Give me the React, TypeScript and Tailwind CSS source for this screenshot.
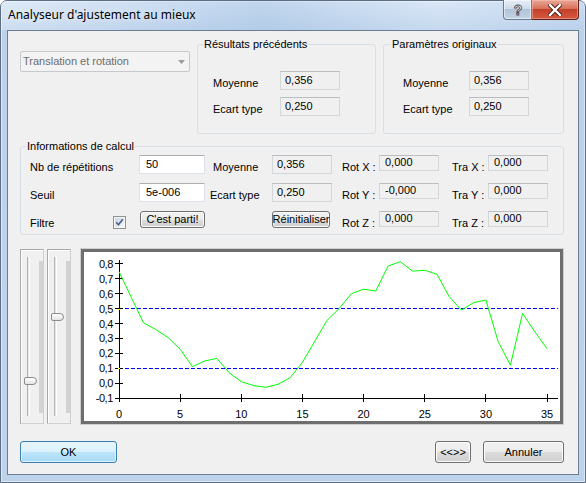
import React from 'react';

const data = [
  0.748, 0.577, 0.405, 0.36, 0.307, 0.227, 0.11, 0.148, 0.166, 0.07, 0.01, -0.017, -0.028, -0.008, 0.036, 0.14,
  0.28, 0.42, 0.5, 0.6, 0.63, 0.618, 0.786, 0.815, 0.752, 0.757, 0.73, 0.58, 0.49, 0.54, 0.558, 0.28, 0.12, 0.468,
  0.345, 0.23,
];

const btn =
  'flex items-center justify-center rounded-[3px] border border-[#707070] bg-[linear-gradient(#f2f2f2,#ebebeb_50%,#dddddd_50%,#cfcfcf)] shadow-[inset_0_0_0_1px_#fbfbfb]';

const ReadField = ({ value }: { value: string }) => (
  <div className="h-[19px] w-[60px] border border-[#d3d6db] border-t-[#babdc2] bg-[#f0f0f0] pl-[4px] pt-[2px] leading-[13px]">
    {value}
  </div>
);

const SmallField = ({ value }: { value: string }) => (
  <div className="h-[16px] w-[60px] border border-[#d3d6db] border-t-[#babdc2] bg-[#f0f0f0] pl-[5px] leading-[13px]">
    {value}
  </div>
);

const Input = ({ value }: { value: string }) => (
  <div className="h-[19px] w-[66px] border border-[#dde2e8] border-t-[#abadb3] bg-white pl-[6px] pt-[2px] leading-[13px]">
    {value}
  </div>
);

const Label = ({ children, className = '' }: { children: React.ReactNode; className?: string }) => (
  <div className={`mt-[6px] whitespace-nowrap leading-[13px] ${className}`}>{children}</div>
);

const Slider = ({ thumb }: { thumb: string }) => (
  <div className="relative flex h-full w-[24px] border border-[#a8a8a8] border-b-[#d0d0d0] border-r-[#d0d0d0] shadow-[inset_1px_1px_0_#ffffff]">
    <div className="mb-[7px] ml-[6px] mt-[7px] w-[3px] border-l border-r border-l-[#b4b4b4] border-r-[#ffffff] bg-[#e6e6e6]" />
    <div className="mb-[10px] ml-[9px] mt-[11px] w-[4px] bg-[#d2d2d2]" />
    <div
      className={`absolute left-[3px] h-[8px] w-[13px] rounded-l-[2px] rounded-r-[4px] border border-[#8c8c8c] bg-[linear-gradient(#ffffff,#e4e4e4)] ${thumb}`}
    />
  </div>
);

const Chart = () => {
  const X = (i: number) => 35 + i * 12.23;
  const Y = (v: number) => 146 - (v + 0.1) * 149;
  const pts = data.map((v, i) => `${X(i).toFixed(1)},${Y(v).toFixed(1)}`).join(' ');
  const yTicks = [0.8, 0.7, 0.6, 0.5, 0.4, 0.3, 0.2, 0.1, 0, -0.1];
  const xTicks = [0, 5, 10, 15, 20, 25, 30, 35];

  return (
    <svg width="476" height="169" className="block" fontFamily="'Liberation Sans', Arial, sans-serif" fontSize="11">
      {/* threshold lines */}
      <line x1="35" y1={Y(0.5)} x2="474" y2={Y(0.5)} stroke="#0000ff" strokeDasharray="4 2" shapeRendering="crispEdges" />
      <line x1="35" y1={Y(0.1)} x2="474" y2={Y(0.1)} stroke="#0000ff" strokeDasharray="4 2" shapeRendering="crispEdges" />
      {/* axes */}
      <line x1="35" y1="8" x2="35" y2="147" stroke="#000" shapeRendering="crispEdges" />
      <line x1="35" y1="146" x2="474" y2="146" stroke="#000" shapeRendering="crispEdges" />
      {yTicks.map((v) => (
        <g key={v}>
          <line x1="31" y1={Y(v)} x2="39" y2={Y(v)} stroke="#000" shapeRendering="crispEdges" />
          <text x="29" y={Y(v) + 4} textAnchor="end" letterSpacing="-0.4">
            {v.toFixed(1).replace('.', ',')}
          </text>
        </g>
      ))}
      {xTicks.map((t) => (
        <g key={t}>
          <line x1={X(t)} y1="142" x2={X(t)} y2="150" stroke="#000" shapeRendering="crispEdges" />
          <text x={X(t)} y="166" textAnchor="middle">
            {t}
          </text>
        </g>
      ))}
      <rect x="34" y={Math.round(Y(0.5))} width="2" height="1" fill="#ffff00" />
      <rect x="34" y={Math.round(Y(0.1))} width="2" height="1" fill="#ffff00" />
      <polyline points={pts} fill="none" stroke="#00ff00" strokeWidth="1" />
    </svg>
  );
};

export default function App() {
  return (
    <div className="h-[483px] w-[586px] font-['Liberation_Sans',Arial,sans-serif] text-[11px] text-black">
      <div className="flex h-full w-full flex-col rounded-t-[7px] border border-[#5d6d82] bg-[linear-gradient(180deg,#d3e3f5_0px,#bcd2eb_30px,#bdd3ec_100%)] shadow-[inset_0_0_0_1px_rgba(255,255,255,0.5)]">
        {/* title bar */}
        <div className="flex h-[29px] items-start bg-[linear-gradient(90deg,rgba(255,255,255,0.25),rgba(160,190,225,0.35)_45%,rgba(255,255,255,0.15)_75%,rgba(180,205,235,0.3))]">
          <div className="pl-[7px] pt-[6px] font-['Noto_Sans',sans-serif] text-[12px] leading-[16px] [text-shadow:0_0_6px_rgba(255,255,255,0.95)]">
            Analyseur d'ajustement au mieux
          </div>
          <div className="-mt-[1px] ml-auto mr-[6px] flex h-[20px]">
            <div className="flex w-[29px] items-center justify-center rounded-bl-[4px] border border-t-0 border-[#6b7c92] bg-[linear-gradient(#e6eef7,#cfdbe9_45%,#b2c4d9_50%,#c4d4e6)] shadow-[inset_0_0_0_1px_rgba(255,255,255,0.5)]">
              <svg width="12" height="14">
                <text x="6" y="12" textAnchor="middle" fontFamily="'Liberation Sans', Arial, sans-serif" fontSize="14" fontWeight="bold" fill="#ffffff" stroke="#3f4c5e" strokeWidth="0.9">?</text>
              </svg>
            </div>
            <div className="flex w-[47px] items-center justify-center rounded-br-[4px] border border-l-0 border-t-0 border-[#5e2119] bg-[linear-gradient(#eaa997,#d8715b_45%,#c4412a_50%,#d3583f)] shadow-[inset_0_0_0_1px_rgba(255,200,190,0.45)]">
              <svg width="14" height="12" viewBox="0 0 14 12">
                <path d="M2 1 L12 11 M12 1 L2 11" stroke="#4a1a14" strokeWidth="4.2" strokeLinecap="square" />
                <path d="M2 1 L12 11 M12 1 L2 11" stroke="#ffffff" strokeWidth="2.4" strokeLinecap="square" />
              </svg>
            </div>
          </div>
        </div>

        {/* client area */}
        <div className="mx-[6px] mb-[7px] flex flex-1 flex-col border border-[#6c7d92] bg-[#f0f0f0] pl-[12px] pr-[14px] pt-[7px]">
          {/* top row */}
          <div className="flex h-[96px]">
            <div className="mt-[13px] flex h-[21px] w-[170px] items-center rounded-[2px] border border-[#c5c8cc] bg-[#f3f3f3] pl-[2px] leading-[13px] text-[#6d6d6d]">
              <span>Translation et rotation</span>
              <svg className="ml-auto mr-[4px]" width="7" height="4">
                <path d="M0 0h7L3.5 4z" fill="#9a9a9a" />
              </svg>
            </div>

            <fieldset className="ml-[7px] h-[96px] w-[179px] rounded-[3px] border border-[#d5dfe5] p-0">
              <legend className="ml-[5px] px-[1px] leading-[13px]">Résultats précédents</legend>
              <div className="flex flex-col gap-[7px] pl-[15px] pt-[20px]">
                <div className="flex">
                  <Label className="w-[67px]">Moyenne</Label>
                  <ReadField value="0,356" />
                </div>
                <div className="flex">
                  <Label className="w-[67px]">Ecart type</Label>
                  <ReadField value="0,250" />
                </div>
              </div>
            </fieldset>

            <fieldset className="ml-[7px] h-[96px] w-[181px] rounded-[3px] border border-[#d5dfe5] p-0">
              <legend className="ml-[7px] px-[1px] leading-[13px]">Paramètres originaux</legend>
              <div className="flex flex-col gap-[7px] pl-[19px] pt-[20px]">
                <div className="flex">
                  <Label className="w-[66px]">Moyenne</Label>
                  <ReadField value="0,356" />
                </div>
                <div className="flex">
                  <Label className="w-[66px]">Ecart type</Label>
                  <ReadField value="0,250" />
                </div>
              </div>
            </fieldset>
          </div>

          {/* informations de calcul */}
          <fieldset className="mt-[6px] h-[95px] rounded-[3px] border border-[#d5dfe5] p-0">
            <legend className="ml-[5px] px-[1px] leading-[13px]">Informations de calcul</legend>
            <div className="grid grid-cols-[109px_66px_67px_60px_47px_60px_49px_60px] grid-rows-[19px_19px_19px] gap-y-[9px] pl-[9px] pt-[2px]">
              <Label>Nb de répétitions</Label>
              <Input value="50" />
              <Label className="pl-[8px]">Moyenne</Label>
              <ReadField value="0,356" />
              <Label className="pl-[10px]">Rot X :</Label>
              <SmallField value="0,000" />
              <Label className="pl-[13px]">Tra X :</Label>
              <SmallField value="0,000" />

              <Label>Seuil</Label>
              <Input value="5e-006" />
              <Label className="pl-[5px]">Ecart type</Label>
              <ReadField value="0,250" />
              <Label className="pl-[10px]">Rot Y :</Label>
              <SmallField value="-0,000" />
              <Label className="pl-[13px]">Tra Y :</Label>
              <SmallField value="0,000" />

              <div className="flex">
                <Label className="mt-[5px]">Filtre</Label>
                <svg className="ml-auto mr-[13px] mt-[5px]" width="13" height="13">
                  <defs>
                    <linearGradient id="cb" x1="0" y1="0" x2="1" y2="1">
                      <stop offset="0" stopColor="#cbd6e6" />
                      <stop offset="1" stopColor="#f4f7fb" />
                    </linearGradient>
                  </defs>
                  <rect x="0.5" y="0.5" width="12" height="12" fill="#f6f6f6" stroke="#8f9092" />
                  <rect x="2" y="2" width="9" height="9" fill="url(#cb)" />
                  <path d="M3.2 6.2 L5.4 8.8 L9.8 3.2" stroke="#4d5f86" strokeWidth="1.6" fill="none" />
                </svg>
              </div>
              <div className={`ml-[1px] h-[17px] w-[65px] leading-[13px] ${btn}`}>C'est parti!</div>
              <div />
              <div className={`h-[17px] w-[58px] leading-[13px] ${btn}`}>Réinitialiser</div>
              <Label className="mt-[5px] pl-[10px]">Rot Z :</Label>
              <SmallField value="0,000" />
              <Label className="mt-[5px] pl-[13px]">Tra Z :</Label>
              <SmallField value="0,000" />
            </div>
          </fieldset>

          {/* sliders and chart */}
          <div className="mt-[14px] flex h-[175px]">
            <Slider thumb="top-[127px]" />
            <div className="ml-[3px] h-full">
              <Slider thumb="top-[63px]" />
            </div>
            <div className="ml-[10px] h-full w-[482px] border-[3px] border-[#6e6e6e] bg-white shadow-[0_0_0_1px_#cfcfcf]">
              <Chart />
            </div>
          </div>

          {/* bottom buttons */}
          <div className="mt-[17px] flex h-[22px]">
            <div className="flex w-[97px] items-center justify-center rounded-[3px] border border-[#3c7fb1] bg-[linear-gradient(#eaf6fd,#d9f0fc_50%,#bee6fd_50%,#a7d9f5)] shadow-[inset_0_0_0_1px_#dff3fe]">
              OK
            </div>
            <div className={`ml-auto w-[36px] ${btn}`}>&lt;&lt;&gt;&gt;</div>
            <div className={`ml-[12px] w-[81px] ${btn}`}>Annuler</div>
          </div>
        </div>
      </div>
    </div>
  );
}
